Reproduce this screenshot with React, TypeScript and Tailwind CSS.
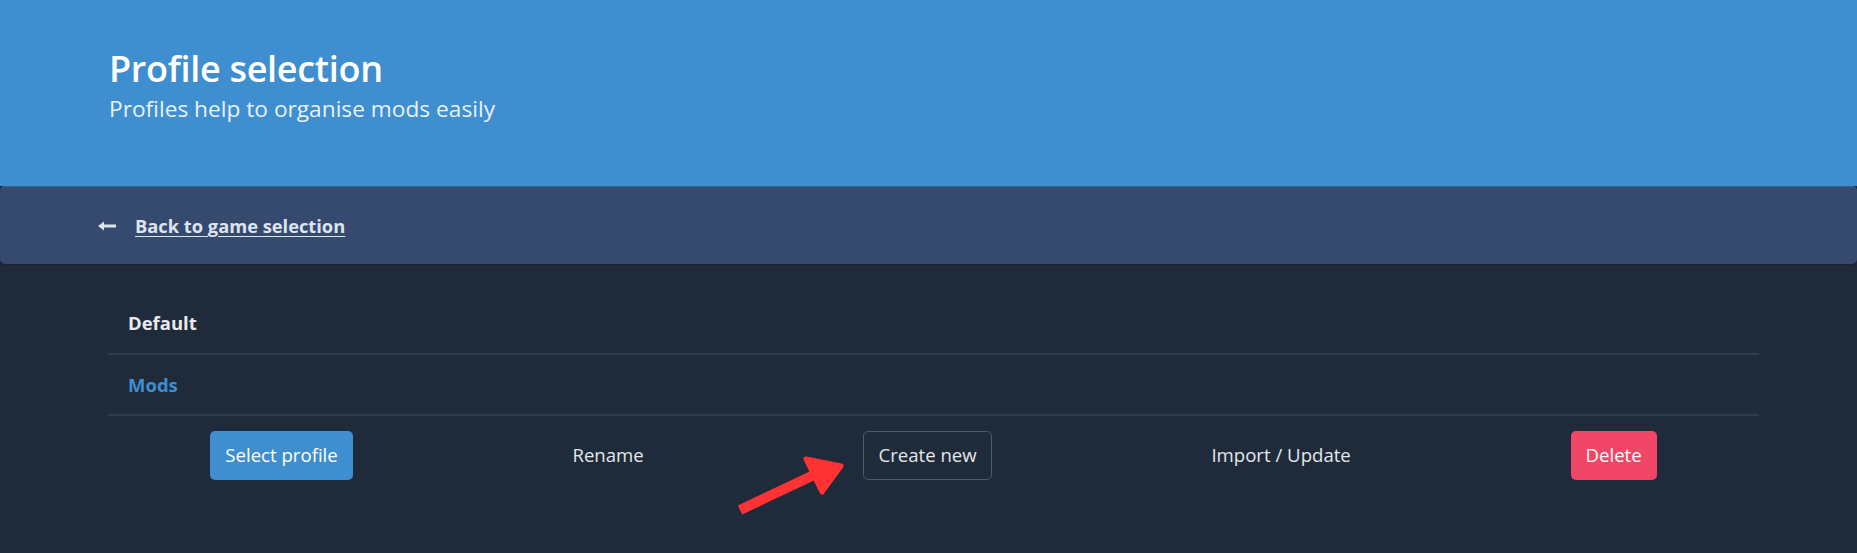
import React from 'react';

function ActionButton({ label, kind }: { label: string; kind: 'primary' | 'ghost' | 'outline' | 'danger' }) {
  const styles = {
    primary: 'bg-[#3e8ed0] border-transparent text-white',
    ghost: 'bg-transparent border-transparent text-[#e4e7eb]',
    outline: 'bg-transparent border-[#4b5a6c] text-[#e4e7eb]',
    danger: 'bg-[#f14668] border-transparent text-white',
  };
  return (
    <button
      className={`h-[49px] px-[14px] border rounded-[5px] text-[18.6px] leading-none flex items-center ${styles[kind]}`}
    >
      {label}
    </button>
  );
}

export default function App() {
  return (
    <div className="relative min-h-[553px] bg-[#1f2b3a] font-['Open_Sans',sans-serif] overflow-hidden">
      <header className="h-[186px] bg-[#3e8ed0] pl-[109px] pt-[44px]">
        <h1 className="text-[36px] font-semibold text-white leading-[50px] tracking-[-0.3px]">Profile selection</h1>
        <p className="text-[22.7px] text-[#e9f2fb] leading-[30px]">Profiles help to organise mods easily</p>
      </header>

      <nav className="h-[78px] bg-[#364a6f] rounded-[5px] border-t border-[#33679a] shadow-[0_1px_2px_rgba(0,0,0,0.25)] flex items-center pl-[98px]">
        <svg width="18" height="12" viewBox="0 0 18 12" className="mr-[19px] mt-[1px]">
          <path d="M0 6 L6 1.5 L6 4.6 L18 4.6 L18 7.4 L6 7.4 L6 10.5 Z" fill="#dde4ee" />
        </svg>
        <a className="text-[18.3px] font-bold text-[#dde4ee] underline underline-offset-[3px] decoration-1">
          Back to game selection
        </a>
      </nav>

      <div className="ml-[108px] w-[1651px] pt-[29px]">
        <div className="h-[62px] border-b-2 border-[#2f3c4c] pl-[20px] flex items-center text-[18.5px] font-bold text-[#e8eaed]">
          Default
        </div>
        <div className="h-[61px] border-b-2 border-[#2f3c4c] pl-[20px] flex items-center text-[18.5px] font-bold text-[#3e8ed0]">
          Mods
        </div>
        <div className="flex justify-around pt-[15px]">
          <ActionButton label="Select profile" kind="primary" />
          <ActionButton label="Rename" kind="ghost" />
          <ActionButton label="Create new" kind="outline" />
          <ActionButton label="Import / Update" kind="ghost" />
          <ActionButton label="Delete" kind="danger" />
        </div>
      </div>

      <svg className="absolute left-[728px] top-[448px]" width="124" height="72" viewBox="728 448 124 72">
        <line x1="740" y1="510" x2="816" y2="474" stroke="#ff3333" strokeWidth="10" />
        <polygon
          points="806,459 841,466 822,492"
          fill="#ff3333"
          stroke="#ff3333"
          strokeWidth="5"
          strokeLinejoin="round"
        />
      </svg>
    </div>
  );
}
